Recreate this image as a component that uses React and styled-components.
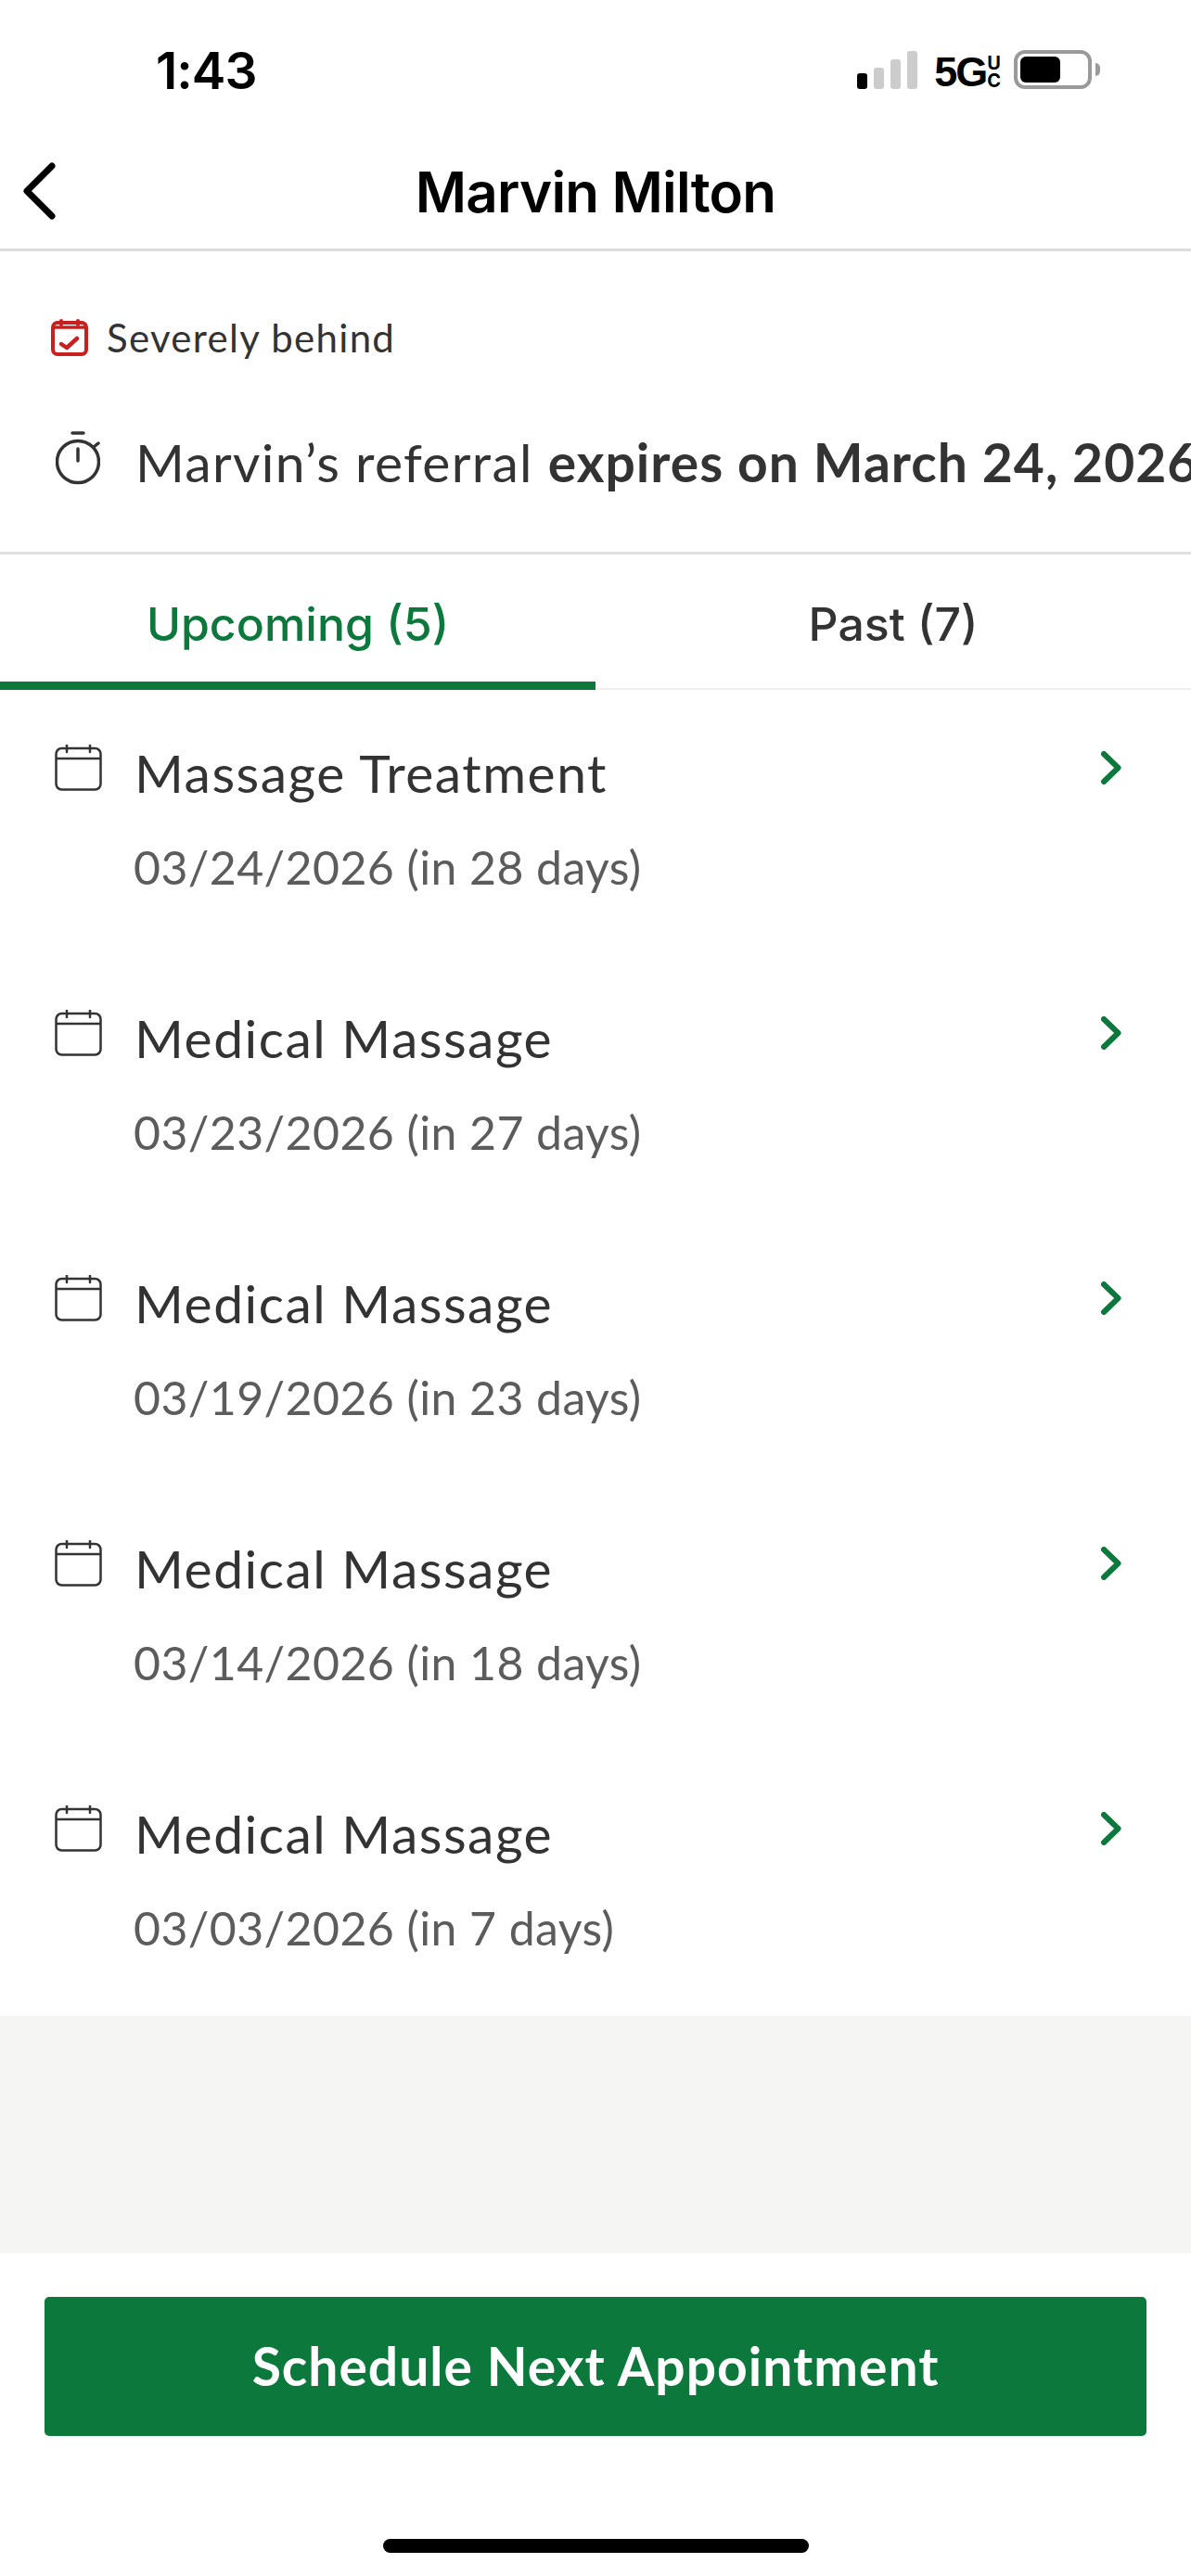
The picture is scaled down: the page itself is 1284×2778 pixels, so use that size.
import React from "react";
import styled, { createGlobalStyle } from "styled-components";

const GREEN = "#0c783c";
const INK = "#333333";

const appointments = [
  { title: "Massage Treatment", when: "03/24/2026 (in 28 days)" },
  { title: "Medical Massage", when: "03/23/2026 (in 27 days)" },
  { title: "Medical Massage", when: "03/19/2026 (in 23 days)" },
  { title: "Medical Massage", when: "03/14/2026 (in 18 days)" },
  { title: "Medical Massage", when: "03/03/2026 (in 7 days)" },
];

const GlobalStyle = createGlobalStyle`
  html, body {
    margin: 0;
    padding: 0;
    background: #fff;
  }
  * {
    box-sizing: border-box;
  }
  svg {
    flex: none;
  }
`;

const Screen = styled.div`
  width: 1284px;
  height: 2778px;
  display: flex;
  flex-direction: column;
  overflow: hidden;
  background: #fff;
  font-family: Lato, "Liberation Sans", sans-serif;
  color: ${INK};
`;

const StatusBar = styled.div`
  height: 150px;
  flex: none;
  display: flex;
  justify-content: space-between;
  align-items: flex-start;
  padding: 43px 98px 0 168px;
`;

const Clock = styled.div`
  font-family: Inter, sans-serif;
  font-size: 55px;
  line-height: 66px;
  font-weight: 600;
  letter-spacing: -1px;
  color: #000;
`;

const StatusIcons = styled.div`
  display: flex;
  align-items: flex-end;
  height: 53px;
`;

const Signal = styled.div`
  display: flex;
  align-items: flex-end;
  gap: 7px;
  margin-right: 18px;
`;

const SignalBar = styled.span`
  width: 11px;
  height: ${(p) => p.$h}px;
  border-radius: 3px;
  background: ${(p) => (p.$on ? "#000" : "#cccccc")};
`;

const Network = styled.div`
  font-family: "Liberation Sans", sans-serif;
  font-size: 45px;
  line-height: 36px;
  letter-spacing: -2px;
  font-weight: 700;
  color: #000;
`;

const NetworkSuffix = styled.div`
  display: flex;
  flex-direction: column;
  align-items: center;
  font-family: Inter, sans-serif;
  font-size: 20px;
  line-height: 19px;
  font-weight: 700;
  color: #000;
  margin: 0 14px -1px 1px;
`;

const Battery = styled.div`
  width: 84px;
  height: 42px;
  border: 4px solid #9a9a9a;
  border-radius: 12px;
  padding: 3px;
`;

const BatteryFill = styled.div`
  width: 43px;
  height: 100%;
  border-radius: 6px;
  background: #000;
`;

const BatteryTip = styled.div`
  width: 5px;
  height: 14px;
  margin: 0 0 14px 4px;
  border-radius: 0 7px 7px 0;
  background: #9a9a9a;
`;

const NavBar = styled.div`
  height: 121px;
  flex: none;
  position: relative;
  display: flex;
  align-items: center;
  justify-content: center;
  padding-bottom: 5px;
  border-bottom: 3px solid #dcdcdc;
`;

const BackButton = styled.div`
  position: absolute;
  left: 22px;
  top: 24px;
  display: flex;
`;

const NavTitle = styled.div`
  font-family: Inter, sans-serif;
  font-size: 60px;
  line-height: 72px;
  font-weight: 600;
  color: #000;
  letter-spacing: -0.8px;
`;

const Summary = styled.div`
  height: 327px;
  flex: none;
  display: flex;
  flex-direction: column;
  border-bottom: 3px solid #e0e0e0;
  padding: 68px 0 0 55px;
`;

const StatusRow = styled.div`
  display: flex;
  align-items: center;
  gap: 20px;
  font-size: 42px;
  line-height: 50px;
  height: 50px;
  letter-spacing: 1.3px;
`;

const ExpiryRow = styled.div`
  display: flex;
  align-items: flex-start;
  gap: 38px;
  margin-top: 76px;
  padding-left: 5px;
  font-size: 57px;
  line-height: 66px;
  white-space: nowrap;
  letter-spacing: 1.3px;
`;

const Strong = styled.b`
  font-weight: 700;
  letter-spacing: 1px;
`;

const Tabs = styled.div`
  height: 146px;
  flex: none;
  display: flex;
  border-bottom: 2px solid #efefef;
`;

const Tab = styled.div`
  flex: 1;
  display: flex;
  align-items: center;
  justify-content: center;
  padding-top: 12px;
  font-family: Inter, sans-serif;
  font-size: 50px;
  font-weight: 500;
  margin-bottom: -2px;
  color: ${(p) => (p.$active ? GREEN : INK)};
  border-bottom: 9px solid ${(p) => (p.$active ? GREEN : "transparent")};
`;

const List = styled.div`
  height: 1430px;
  flex: none;
  display: flex;
  flex-direction: column;
`;

const Row = styled.div`
  height: 286px;
  flex: none;
  display: grid;
  grid-template-columns: 51px 1fr 22px;
  column-gap: 36px;
  padding: 59px 75px 0 59px;
  align-items: start;
`;

const RowText = styled.div`
  display: flex;
  flex-direction: column;
`;

const RowTitle = styled.div`
  font-size: 57px;
  line-height: 68px;
  margin: -4px 0 0 -1px;
  letter-spacing: 1.5px;
`;

const RowDate = styled.div`
  font-size: 50px;
  line-height: 60px;
  margin: 38px 0 0 -2px;
  letter-spacing: 0.4px;
  color: #5c5c5c;
`;

const RowChevron = styled.div`
  display: flex;
  margin-top: 7px;
`;

const Filler = styled.div`
  height: 256px;
  flex: none;
  background: #f5f5f3;
`;

const Footer = styled.div`
  flex: 1;
  display: flex;
  flex-direction: column;
  align-items: center;
  padding: 47px 48px 0;
`;

const ScheduleButton = styled.button`
  width: 100%;
  height: 150px;
  padding: 0 0 2px;
  border: none;
  border-radius: 5px;
  background: ${GREEN};
  color: #fff;
  font-family: Lato, sans-serif;
  font-size: 57px;
  font-weight: 700;
  letter-spacing: 1px;
`;

const HomeBar = styled.div`
  width: 459px;
  height: 15px;
  margin-top: 111px;
  border-radius: 8px;
  background: #000;
`;

const BackIcon = () => (
  <svg width="40" height="64" viewBox="0 0 40 64" fill="none">
    <path d="M34 5 L7 32 L34 59" stroke="#000" strokeWidth="7" strokeLinecap="round" strokeLinejoin="round" />
  </svg>
);

const AlertCalendarIcon = () => (
  <svg width="40" height="40" viewBox="0 0 40 40" fill="none" stroke="#c8201f">
    <rect x="2" y="4" width="36" height="34" rx="5" strokeWidth="4" />
    <path d="M2 9 H38" strokeWidth="3.5" />
    <path d="M11 2 V6 M29 2 V6" strokeWidth="4" strokeLinecap="round" />
    <path d="M11 27 L17 31 L28 21" strokeWidth="4.5" strokeLinecap="round" strokeLinejoin="round" />
  </svg>
);

const TimerIcon = () => (
  <svg width="48" height="58" viewBox="0 0 48 58" fill="none" stroke={INK} strokeWidth="3.5" strokeLinecap="round">
    <path d="M18 2 H30" />
    <circle cx="24" cy="33" r="22.5" />
    <path d="M24 19 V32" />
    <path d="M41 17 L46 13" />
  </svg>
);

const CalendarIcon = () => (
  <svg width="51" height="50" viewBox="0 0 51 50" fill="none" stroke={INK} strokeWidth="2.5">
    <rect x="1.5" y="4" width="48" height="44.5" rx="6" />
    <path d="M1.5 15 H49.5" />
    <path d="M13 0 V8 M38 0 V8" strokeLinecap="round" />
  </svg>
);

const ChevronIcon = () => (
  <svg width="22" height="36" viewBox="0 0 22 36" fill="none">
    <path d="M3 3 L18.5 18 L3 33" stroke={GREEN} strokeWidth="6" strokeLinecap="round" strokeLinejoin="round" />
  </svg>
);

const App = () => (
  <Screen>
    <GlobalStyle />
    <StatusBar>
      <Clock>1:43</Clock>
      <StatusIcons>
        <Signal>
          <SignalBar $h={17} $on />
          <SignalBar $h={23} />
          <SignalBar $h={32} />
          <SignalBar $h={41} />
        </Signal>
        <Network>5G</Network>
        <NetworkSuffix>
          <span>U</span>
          <span>C</span>
        </NetworkSuffix>
        <Battery>
          <BatteryFill />
        </Battery>
        <BatteryTip />
      </StatusIcons>
    </StatusBar>
    <NavBar>
      <BackButton>
        <BackIcon />
      </BackButton>
      <NavTitle>Marvin Milton</NavTitle>
    </NavBar>
    <Summary>
      <StatusRow>
        <AlertCalendarIcon />
        Severely behind
      </StatusRow>
      <ExpiryRow>
        <TimerIcon />
        <span>
          Marvin’s referral <Strong>expires on March 24, 2026</Strong>
        </span>
      </ExpiryRow>
    </Summary>
    <Tabs>
      <Tab $active>Upcoming (5)</Tab>
      <Tab>Past (7)</Tab>
    </Tabs>
    <List>
      {appointments.map((item) => (
        <Row key={item.when}>
          <CalendarIcon />
          <RowText>
            <RowTitle>{item.title}</RowTitle>
            <RowDate>{item.when}</RowDate>
          </RowText>
          <RowChevron>
            <ChevronIcon />
          </RowChevron>
        </Row>
      ))}
    </List>
    <Filler />
    <Footer>
      <ScheduleButton>Schedule Next Appointment</ScheduleButton>
      <HomeBar />
    </Footer>
  </Screen>
);

export default App;
